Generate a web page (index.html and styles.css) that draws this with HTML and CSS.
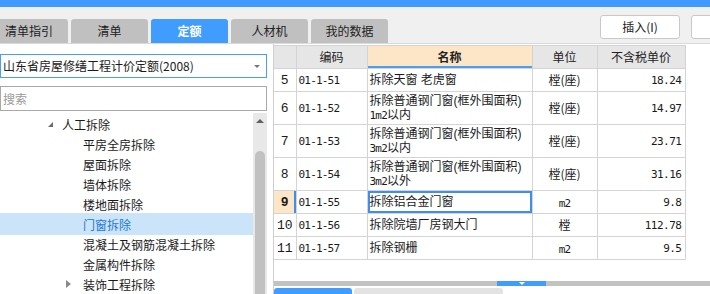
FILE: index.html
```html
<!DOCTYPE html>
<html>
<head>
    <meta charset="utf-8">
    <title>定额</title>
    <link rel="stylesheet" href="styles.css">
</head>
<body>
    <div class="topbar"></div>
    <div class="toolbar">
        <div class="tabs">
            <div class="tab first">清单指引</div>
            <div class="tab">清单</div>
            <div class="tab active">定额</div>
            <div class="tab">人材机</div>
            <div class="tab">我的数据</div>
        </div>
        <div class="actions">
            <div class="btn">插入(I)</div>
            <div class="btn"></div>
        </div>
    </div>
    <div class="main">
        <div class="side">
            <div class="select">山东省房屋修缮工程计价定额(2008)<span class="caret"></span></div>
            <div class="search">搜索</div>
            <div class="treebox">
                <div class="tree">
                    <div class="node lv1"><span class="tw"><i class="open"></i></span>人工拆除</div>
                    <div class="node lv2"><span class="tw"></span>平房全房拆除</div>
                    <div class="node lv2"><span class="tw"></span>屋面拆除</div>
                    <div class="node lv2"><span class="tw"></span>墙体拆除</div>
                    <div class="node lv2"><span class="tw"></span>楼地面拆除</div>
                    <div class="node lv2 sel"><span class="tw"></span>门窗拆除</div>
                    <div class="node lv2"><span class="tw"></span>混凝土及钢筋混凝土拆除</div>
                    <div class="node lv2"><span class="tw"></span>金属构件拆除</div>
                    <div class="node lv2"><span class="tw"><i class="shut"></i></span>装饰工程拆除</div>
                </div>
                <div class="vscroll">
                    <span class="up"></span>
                    <div class="thumb"></div>
                </div>
            </div>
        </div>
        <div class="grid">
            <table>
                <colgroup>
                    <col style="width:22px">
                    <col style="width:71px">
                    <col style="width:165px">
                    <col style="width:65px">
                    <col style="width:88px">
                </colgroup>
                <thead>
                    <tr>
                        <th></th>
                        <th>编码</th>
                        <th class="cur">名称</th>
                        <th>单位</th>
                        <th>不含税单价</th>
                    </tr>
                </thead>
                <tbody>
                    <tr>
                        <td class="no">5</td>
                        <td class="code">01-1-51</td>
                        <td class="name">拆除天窗 老虎窗</td>
                        <td class="unit">樘(座)</td>
                        <td class="price">18.24</td>
                    </tr>
                    <tr class="tall">
                        <td class="no">6</td>
                        <td class="code">01-1-52</td>
                        <td class="name"><div class="ln">拆除普通钢门窗(框外围面积)</div><div class="ln"><span class="sm">1m2</span>以内</div></td>
                        <td class="unit">樘(座)</td>
                        <td class="price">14.97</td>
                    </tr>
                    <tr class="tall">
                        <td class="no">7</td>
                        <td class="code">01-1-53</td>
                        <td class="name"><div class="ln">拆除普通钢门窗(框外围面积)</div><div class="ln"><span class="sm">3m2</span>以内</div></td>
                        <td class="unit">樘(座)</td>
                        <td class="price">23.71</td>
                    </tr>
                    <tr class="tall">
                        <td class="no">8</td>
                        <td class="code">01-1-54</td>
                        <td class="name"><div class="ln">拆除普通钢门窗(框外围面积)</div><div class="ln"><span class="sm">3m2</span>以外</div></td>
                        <td class="unit">樘(座)</td>
                        <td class="price">31.16</td>
                    </tr>
                    <tr class="on">
                        <td class="no">9</td>
                        <td class="code">01-1-55</td>
                        <td class="name focus">拆除铝合金门窗</td>
                        <td class="unit"><span class="sm">m2</span></td>
                        <td class="price">9.8</td>
                    </tr>
                    <tr>
                        <td class="no">10</td>
                        <td class="code">01-1-56</td>
                        <td class="name">拆除院墙厂房钢大门</td>
                        <td class="unit">樘</td>
                        <td class="price">112.78</td>
                    </tr>
                    <tr>
                        <td class="no">11</td>
                        <td class="code">01-1-57</td>
                        <td class="name">拆除钢栅</td>
                        <td class="unit"><span class="sm">m2</span></td>
                        <td class="price">9.5</td>
                    </tr>
                </tbody>
            </table>
            <div class="fill"></div>
            <div class="hbar"><div class="grip"><i></i></div></div>
            <div class="subtabs">
                <div class="sub on"></div>
                <div class="sub"></div>
            </div>
        </div>
    </div>
</body>
</html>
```
FILE: styles.css
```css
body {
    margin: 0;
    width: 710px;
    height: 294px;
    overflow: hidden;
    background: #ffffff;
    color: #1a1a1a;
    font: 12px "Noto Sans CJK SC", "Noto Sans", sans-serif;
}

.topbar {
    height: 7px;
    background: #4099ff;
}

.toolbar {
    display: flex;
    height: 36px;
    background: #f0f0f0;
    border-bottom: 1px solid #dadada;
    overflow: hidden;
}

.tabs {
    display: flex;
    align-self: flex-end;
    gap: 3px;
    flex-shrink: 0;
}

.tab {
    width: 77px;
    height: 24px;
    line-height: 24px;
    text-align: center;
    background: #c0c0c0;
    border-radius: 3px 3px 0 0;
    color: #222;
}

.tab.first {
    width: 63px;
    padding-left: 5px;
    text-align: left;
    border-radius: 0 3px 0 0;
}

.tab.active {
    background: #409dff;
    color: #ffffff;
    font-weight: bold;
}

.actions {
    display: flex;
    gap: 11px;
    margin: 8px 0 0 212px;
    flex-shrink: 0;
}

.btn {
    width: 78px;
    height: 22px;
    line-height: 22px;
    text-align: center;
    background: #ffffff;
    border: 1px solid #c9c9c9;
    border-radius: 3px;
    color: #222;
}

.main {
    display: flex;
    height: 250px;
}

.side {
    width: 267px;
    padding-right: 6px;
    display: flex;
    flex-direction: column;
}

.select {
    position: relative;
    margin-top: 10px;
    height: 22px;
    line-height: 22px;
    padding-left: 2px;
    border: 1px solid #4a9ef5;
    white-space: nowrap;
}

.caret {
    position: absolute;
    right: 6px;
    top: 10px;
    border-top: 3px solid #777;
    border-left: 3px solid transparent;
    border-right: 3px solid transparent;
}

.search {
    margin-top: 8px;
    height: 23px;
    line-height: 23px;
    padding-left: 2px;
    border: 1px solid #a9a9a9;
    color: #9a9a9a;
}

.treebox {
    display: flex;
    flex: 1;
    margin-top: 2px;
    min-height: 0;
}

.tree {
    flex: 1;
    padding-top: 1px;
}

.node {
    display: flex;
    align-items: center;
    height: 20px;
    white-space: nowrap;
}

.lv1 {
    padding-left: 48px;
}

.lv1 .tw {
    width: 14px;
}

.lv2 {
    padding-left: 66px;
}

.lv2 .tw {
    width: 17px;
}

.tw {
    display: flex;
    align-items: center;
    flex-shrink: 0;
}

.open {
    border-bottom: 5px solid #6a6a6a;
    border-left: 5px solid transparent;
}

.shut {
    border-left: 5px solid #8a8a8a;
    border-top: 4px solid transparent;
    border-bottom: 4px solid transparent;
}

.node.sel {
    height: 22px;
    margin: -1px 0;
    background: #cce4f9;
    color: #1c78d8;
}

.vscroll {
    width: 14px;
    display: flex;
    flex-direction: column;
    align-items: center;
    background: #e8e8e8;
}

.up {
    margin-top: 6px;
    border-bottom: 4px solid #606060;
    border-left: 4px solid transparent;
    border-right: 4px solid transparent;
}

.thumb {
    width: 10px;
    flex: 1;
    margin-top: 28px;
    background: #c1c1c1;
    border-radius: 5px 5px 0 0;
}

.grid {
    flex: 1;
    display: flex;
    flex-direction: column;
    border-left: 1px solid #cfcfcf;
}

table {
    width: 411px;
    table-layout: fixed;
    border-collapse: collapse;
    margin-top: 1px;
}

th,
td {
    border: 1px solid #d4d4d4;
    padding: 0 2px;
    line-height: 14px;
    vertical-align: middle;
    white-space: nowrap;
    overflow: hidden;
}

tr > :first-child {
    border-left: none;
}

thead tr {
    height: 23px;
}

th {
    background: #e6e6e6;
    font-weight: normal;
    color: #222;
}

th.cur {
    background: #fde6c8;
    font-weight: bold;
    box-shadow: inset 0 -2px 0 #4a9ef5;
}

tbody tr {
    height: 23px;
}

tbody tr.tall {
    height: 33px;
}

.ln {
    height: 14px;
    line-height: 14px;
}

.no {
    text-align: center;
    font: 13px "Liberation Mono", monospace;
    padding: 0;
}

.code {
    font: 11px "DejaVu Sans Mono", monospace;
    letter-spacing: -0.8px;
}

.name {
    padding-left: 2px;
    font-family: "Liberation Sans", "Noto Sans CJK SC", sans-serif;
}

.unit {
    text-align: center;
}

.price {
    text-align: right;
    padding-right: 3px;
    font: 11px "DejaVu Sans Mono", monospace;
    letter-spacing: -0.5px;
}

.sm {
    font: 11px "DejaVu Sans Mono", monospace;
    letter-spacing: -0.8px;
}

tr.on .no {
    background: #fde6c8;
    font-weight: bold;
    box-shadow: inset -2px 0 0 #3d8ef0;
}

.focus {
    box-shadow: inset 0 0 0 2px #3d8ef0;
}

.fill {
    flex: 1;
}

.hbar {
    height: 5px;
    background: #c2c2c2;
    margin-bottom: 2px;
}

.grip {
    display: flex;
    justify-content: center;
    width: 49px;
    height: 5px;
    margin-left: 223px;
    background: #409dff;
}

.grip i {
    margin-top: 1px;
    border-top: 3px solid #ffffff;
    border-left: 3px solid transparent;
    border-right: 3px solid transparent;
    height: 0;
}

.subtabs {
    display: flex;
    gap: 2px;
    height: 6px;
}

.sub {
    width: 149px;
    background: #e3e3e3;
    border-radius: 3px 3px 0 0;
}

.sub.on {
    width: 78px;
    background: #409dff;
}
```
